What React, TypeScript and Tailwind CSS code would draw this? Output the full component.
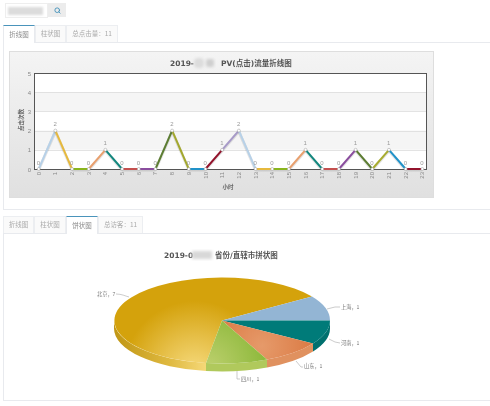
import React from "react";
import { Search } from "lucide-react";

const cjk = '"Noto Sans CJK SC", "Liberation Sans", sans-serif';
const data = [0, 2, 0, 0, 1, 0, 0, 0, 2, 0, 0, 1, 2, 0, 0, 0, 1, 0, 0, 1, 0, 1, 0, 0];
const colors = ["#b7d1e8", "#e6b93e", "#8ab51e", "#e9a06e", "#12877e", "#c4504f", "#8a4d9e", "#5c7d32", "#a3a82e", "#2092c9", "#93132c", "#a79ac8", "#b7d1e8", "#e6b93e", "#8ab51e", "#e9a06e", "#12877e", "#c4504f", "#8a4d9e", "#5c7d32", "#a8ac30", "#2092c9", "#93132c"];
const px = (i: number) => 38.7 + i * 16.68;
const py = (v: number) => 169 - v * 19.2;

function Tabs({ items, active }: { items: { label: string; w: string }[]; active: number }) {
  return (
    <div className="flex h-[18px] border-b border-[#e8eaee]">
      {items.map((t, i) => (
        <div
          key={t.label}
          className={
            i === active
              ? `${t.w} h-[18px] flex items-center justify-center bg-white border-t border-t-[#4a94bb] border-x border-x-[#e8eaee] text-[#888] text-[6.5px]`
              : `${t.w} h-[17px] flex items-center justify-center bg-[#fafafa] border-t border-x border-[#eceef1] text-[#aaa] text-[6.5px]`
          }
        >
          {t.label}
        </div>
      ))}
    </div>
  );
}

function LineChart() {
  return (
    <svg width="423" height="145" className="block">
      <defs>
        <filter id="soft" x="-20%" y="-20%" width="140%" height="140%">
          <feGaussianBlur stdDeviation="1.5" />
        </filter>
      </defs>
      <g transform="translate(-10,-52)">
        <text x="170" y="66" fontSize="7.5" fontWeight="700" fill="#555" fontFamily='"DejaVu Sans", "Noto Sans CJK SC", sans-serif'>2019-</text>
        <text x="221" y="66" fontSize="7.5" fontWeight="700" fill="#555" fontFamily='"DejaVu Sans", "Noto Sans CJK SC", sans-serif'>PV(点击)流量折线图</text>
        <rect x="194" y="58" width="10" height="10" rx="4" fill="#dcdcdc" filter="url(#soft)" />
        <rect x="206" y="59" width="8" height="8" rx="2" fill="#cfcfcf" filter="url(#soft)" />
        <rect x="34.5" y="73.5" width="392" height="96" fill="#fff" />
        <rect x="34.5" y="92" width="392" height="19.2" fill="#f5f5f5" />
        <rect x="34.5" y="130.5" width="392" height="19.2" fill="#f5f5f5" />
        {[1, 2, 3, 4].map((v) => (
          <line key={v} x1="34.5" x2="426.5" y1={Math.round(py(v)) + 0.5} y2={Math.round(py(v)) + 0.5} stroke="#dcdcdc" strokeWidth="0.8" />
        ))}
        <rect x="34.5" y="73.5" width="392" height="96" fill="none" stroke="#555" strokeWidth="1" />
        {[0, 1, 2, 3, 4, 5].map((v) => (
          <text key={v} x="31" y={py(v) + 2.5} fontSize="6" textAnchor="end" fill="#888" fontFamily="Liberation Sans, sans-serif">{v}</text>
        ))}
        <text transform="translate(22.5,120) rotate(-90)" fontSize="5.5" fontWeight="700" textAnchor="middle" fill="#666" fontFamily={cjk}>点击次数</text>
        {colors.map((c, i) => (
          <g key={i}>
            <line x1={px(i)} y1={py(data[i]) + 1} x2={px(i + 1)} y2={py(data[i + 1]) + 1} stroke="#000" strokeOpacity="0.1" strokeWidth="3" />
            <line x1={px(i)} y1={py(data[i])} x2={px(i + 1)} y2={py(data[i + 1])} stroke={c} strokeWidth="2" />
          </g>
        ))}
        {data.map((v, i) => (
          <g key={i}>
            <circle cx={px(i)} cy={py(v)} r="1.5" fill="#fff" stroke="#9a9a9a" strokeWidth="0.5" />
            <text x={px(i) - 0.3} y={py(v) - 4.5} fontSize="6" textAnchor="middle" fill="#999" fontFamily="Liberation Sans, sans-serif">{v}</text>
            <text transform={`translate(${px(i) + 2},172) rotate(-90)`} fontSize="6" textAnchor="end" fill="#888" fontFamily="Liberation Sans, sans-serif">{i}</text>
          </g>
        ))}
        <text x="228" y="189" fontSize="5.5" fontWeight="700" textAnchor="middle" fill="#666" fontFamily={cjk}>小时</text>
      </g>
    </svg>
  );
}

const cx = 222, cy = 319.5, rx = 108, ry = 43, depth = 8;
type P = [number, number];
const R: P = [330, 319.5], TE: P = [313, 342.5], OE: P = [267, 358.5], GE: P = [206, 362], L: P = [114, 319.5], BE: P = [312, 295.5];
const wedge = (a: P, b: P, large = 0) => `M${cx} ${cy} L${a[0]} ${a[1]} A${rx} ${ry} 0 ${large} 1 ${b[0]} ${b[1]} Z`;
const side = (a: P, b: P) => `M${a[0]} ${a[1]} A${rx} ${ry} 0 0 1 ${b[0]} ${b[1]} L${b[0]} ${b[1] + depth} A${rx} ${ry} 0 0 0 ${a[0]} ${a[1] + depth} Z`;

function PieChart() {
  const labels = [
    { t: "北京，7", x: 97, y: 295, d: "M116 293 C122 293 125 295 129 296" },
    { t: "上海，1", x: 341, y: 308, d: "M327 308 L335 306 L340 306" },
    { t: "河南，1", x: 341, y: 344, d: "M329 338 L335 341 L340 342" },
    { t: "山东，1", x: 304, y: 367, d: "M296 360 L301 366 L303 366" },
    { t: "四川，1", x: 241, y: 380, d: "M237 370 L237 378 L240 378" },
  ];
  return (
    <svg width="486" height="166" className="block">
      <defs>
        <filter id="soft2" x="-20%" y="-20%" width="140%" height="140%">
          <feGaussianBlur stdDeviation="1.5" />
        </filter>
        <radialGradient id="gold" gradientUnits="userSpaceOnUse" cx="195" cy="372" r="72">
          <stop offset="0" stopColor="#f7dc80" />
          <stop offset="0.5" stopColor="#e6bf48" />
          <stop offset="1" stopColor="#d4a20c" />
        </radialGradient>
        <linearGradient id="goldSide" gradientUnits="userSpaceOnUse" x1="114" y1="0" x2="206" y2="0">
          <stop offset="0" stopColor="#c09614" />
          <stop offset="0.6" stopColor="#dfb940" />
          <stop offset="1" stopColor="#f5d878" />
        </linearGradient>
        <radialGradient id="green" gradientUnits="userSpaceOnUse" cx="208" cy="366" r="60">
          <stop offset="0" stopColor="#bdd06e" />
          <stop offset="1" stopColor="#8cb83a" />
        </radialGradient>
        <radialGradient id="orange" gradientUnits="userSpaceOnUse" cx="262" cy="345" r="50">
          <stop offset="0" stopColor="#e69a6a" />
          <stop offset="1" stopColor="#db7b45" />
        </radialGradient>
      </defs>
      <g transform="translate(-4,-233)">
        <text x="164" y="257" fontSize="7.5" fontWeight="700" fill="#555" fontFamily='"DejaVu Sans", "Noto Sans CJK SC", sans-serif'>2019-0</text>
        <text x="215" y="257" fontSize="7.5" fontWeight="700" fill="#555" fontFamily='"DejaVu Sans", "Noto Sans CJK SC", sans-serif'>省份/直辖市拼状图</text>
        <rect x="192" y="250" width="20" height="8" fill="#d8d8d8" filter="url(#soft2)" />
        <path d={side(R, TE)} fill="#00706e" />
        <path d={side(TE, OE)} fill="#e0915f" />
        <path d={side(OE, GE)} fill="#b0c95c" />
        <path d={side(GE, L)} fill="url(#goldSide)" />
        <path d={wedge(GE, BE, 1)} fill="url(#gold)" />
        <path d={wedge(BE, R)} fill="#93b5d4" />
        <path d={wedge(R, TE)} fill="#007b79" />
        <path d={wedge(TE, OE)} fill="url(#orange)" />
        <path d={wedge(OE, GE)} fill="url(#green)" />
        {labels.map((l) => (
          <g key={l.t}>
            <path d={l.d} fill="none" stroke="#aaa" strokeWidth="0.6" />
            <text x={l.x} y={l.y} fontSize="5.2" fill="#777" fontFamily={cjk}>{l.t}</text>
          </g>
        ))}
      </g>
    </svg>
  );
}

export default function App() {
  return (
    <div className="w-[490px] h-[406px] bg-white overflow-hidden pl-[3px] pt-[3px] blur-[0.35px]" style={{ fontFamily: cjk }}>
      <div className="flex h-[15px] ml-[2px]">
        <div className="w-[43px] h-[15px] bg-white border border-[#eee] flex items-center pl-[2px]">
          <div className="w-[35px] h-[8px] bg-[#dcdcdc] blur-[1px]" />
        </div>
        <div className="w-[18px] h-[14px] bg-[#ececec] flex items-center justify-center">
          <Search size={7} strokeWidth={3} className="text-[#3f8fb8]" />
        </div>
      </div>

      <div className="mt-[7px]">
        <Tabs
          active={0}
          items={[
            { label: "折线图", w: "w-[32px]" },
            { label: "柱状图", w: "w-[31px]" },
            { label: "总点击量：11", w: "w-[52px]" },
          ]}
        />
        <div className="h-[167px] border-l border-b border-[#e8eaee] pl-[5px] pt-[8px]">
          <div className="w-[425px] h-[147px] border border-[#dedede] bg-gradient-to-b from-[#f4f4f4] to-[#e0e0e0]">
            <LineChart />
          </div>
        </div>
      </div>

      <div className="mt-[6px]">
        <Tabs
          active={2}
          items={[
            { label: "折线图", w: "w-[31px]" },
            { label: "柱状图", w: "w-[32px]" },
            { label: "饼状图", w: "w-[32px]" },
            { label: "总访客：11", w: "w-[45px]" },
          ]}
        />
        <div className="h-[167px] border-l border-b border-[#e8eaee]">
          <PieChart />
        </div>
      </div>
    </div>
  );
}
